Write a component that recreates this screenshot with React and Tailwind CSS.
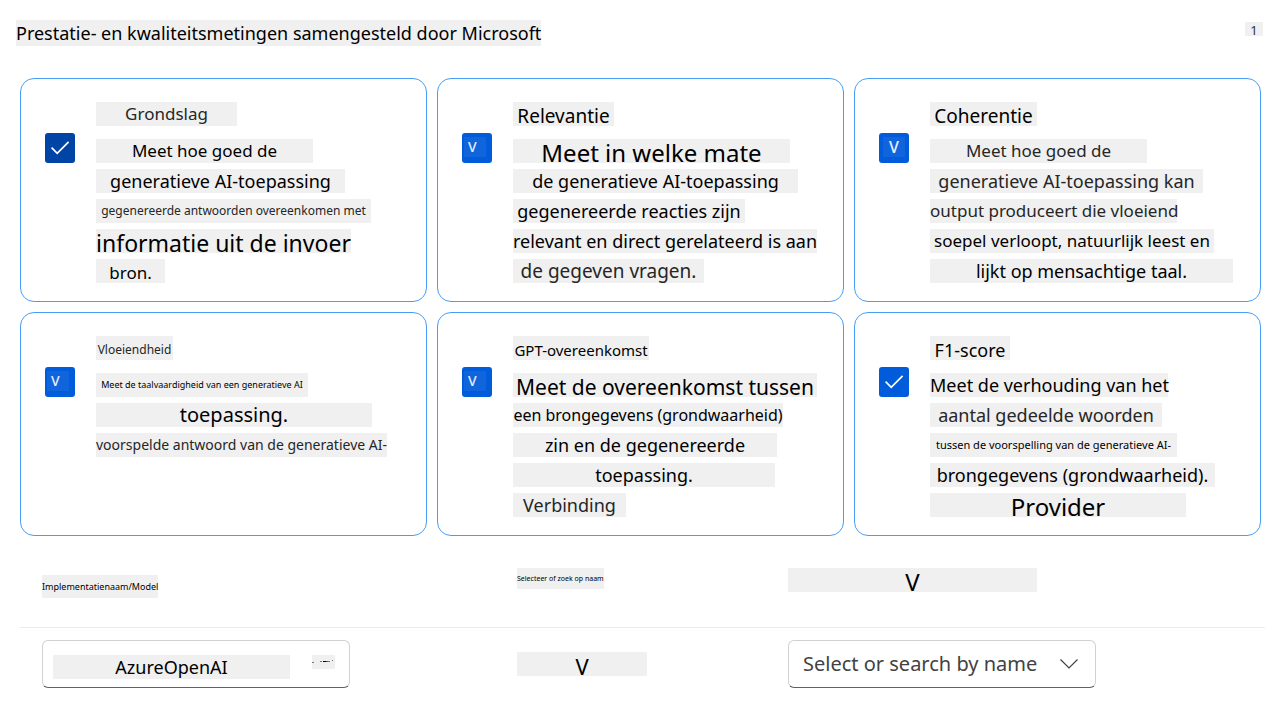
import React from 'react';

const DARK = 'text-black';
const SOFT = 'text-[#262626]';

const METRICS = [
  {
    id: 'grondslag',
    mark: 'check',
    box: 'bg-[#0044a6]',
    title: { text: 'Grondslag', style: 'w-[141px] text-[17px] leading-6', tone: SOFT },
    lines: [
      { text: 'Meet hoe goed de', style: 'w-[217px] text-[17px] leading-6', tone: DARK },
      { text: 'generatieve AI-toepassing', style: 'w-[249px] text-[18px] leading-6', tone: DARK },
      { text: 'gegenereerde antwoorden overeenkomen met', style: 'w-[275px] text-[12px] leading-6', tone: SOFT },
      { text: 'informatie uit de invoer', style: 'w-[255px] text-[23px] leading-7', tone: DARK },
      { text: 'bron.', style: 'w-[69px] text-[17px] leading-7', tone: DARK },
    ],
  },
  {
    id: 'relevantie',
    mark: 'v',
    box: 'bg-[#005cdb]',
    title: { text: 'Relevantie', style: 'w-[101px] text-[19px] leading-7', tone: DARK },
    lines: [
      { text: 'Meet in welke mate', style: 'w-[277px] text-[24px] leading-7', tone: DARK },
      { text: 'de generatieve AI-toepassing', style: 'w-[285px] text-[18px] leading-6', tone: DARK },
      { text: 'gegenereerde reacties zijn', style: 'w-[232px] text-[18px] leading-6', tone: DARK },
      { text: 'relevant en direct gerelateerd is aan', style: 'w-[304px] text-[18px] leading-6', tone: DARK },
      { text: 'de gegeven vragen.', style: 'w-[191px] text-[19px] leading-6', tone: SOFT },
    ],
  },
  {
    id: 'coherentie',
    mark: 'v-large',
    box: 'bg-[#005cdb]',
    title: { text: 'Coherentie', style: 'w-[107px] text-[19px] leading-7', tone: DARK },
    lines: [
      { text: 'Meet hoe goed de', style: 'w-[217px] text-[17px] leading-6', tone: SOFT },
      { text: 'generatieve AI-toepassing kan', style: 'w-[273px] text-[18px] leading-6', tone: SOFT },
      { text: 'output produceert die vloeiend', style: 'w-[247px] text-[17px] leading-6', tone: SOFT },
      { text: 'soepel verloopt, natuurlijk leest en', style: 'w-[284px] text-[17px] leading-6', tone: DARK },
      { text: 'lijkt op mensachtige taal.', style: 'w-[303px] text-[18px] leading-6', tone: DARK },
    ],
  },
  {
    id: 'vloeiendheid',
    mark: 'v',
    box: 'bg-[#005cdb]',
    title: { text: 'Vloeiendheid', style: 'w-[77px] text-[12px] leading-7', tone: SOFT },
    lines: [
      { text: 'Meet de taalvaardigheid van een generatieve AI', style: 'w-[212px] text-[9px] leading-6', tone: DARK },
      { text: 'toepassing.', style: 'w-[276px] text-[20px] leading-6', tone: DARK },
      { text: 'voorspelde antwoord van de generatieve AI-', style: 'w-[291px] text-[14px] leading-6', tone: SOFT },
    ],
  },
  {
    id: 'gpt-overeenkomst',
    mark: 'v',
    box: 'bg-[#005cdb]',
    title: { text: 'GPT-overeenkomst', style: 'w-[136px] text-[15px] leading-7', tone: DARK },
    lines: [
      { text: 'Meet de overeenkomst tussen', style: 'w-[304px] text-[21px] leading-7', tone: DARK },
      { text: 'een brongegevens (grondwaarheid)', style: 'w-[270px] text-[16px] leading-6', tone: DARK },
      { text: 'zin en de gegenereerde', style: 'w-[264px] text-[18px] leading-6', tone: DARK },
      { text: 'toepassing.', style: 'w-[262px] text-[18px] leading-6', tone: DARK },
      { text: 'Verbinding', style: 'w-[113px] text-[18px] leading-6', tone: SOFT },
    ],
  },
  {
    id: 'f1-score',
    mark: 'check',
    box: 'bg-[#005cdb]',
    title: { text: 'F1-score', style: 'w-[80px] text-[18px] leading-7', tone: DARK },
    lines: [
      { text: 'Meet de verhouding van het', style: 'w-[238px] text-[18px] leading-6', tone: DARK },
      { text: 'aantal gedeelde woorden', style: 'w-[232px] text-[18px] leading-6', tone: SOFT },
      { text: 'tussen de voorspelling van de generatieve AI-', style: 'w-[247px] text-[11px] leading-6', tone: DARK },
      { text: 'brongegevens (grondwaarheid).', style: 'w-[285px] text-[18px] leading-6', tone: DARK },
      { text: 'Provider', style: 'w-[256px] text-[24px] leading-7', tone: DARK },
    ],
  },
];

function Chip({ text, style, tone }) {
  return (
    <span className={`block h-6 bg-[#f0f0f0] text-center whitespace-nowrap ${style} ${tone}`}>{text}</span>
  );
}

function Mark({ kind }) {
  if (kind === 'check') {
    return (
      <svg
        viewBox="0 0 30 30"
        className="pointer-events-none absolute inset-0 hidden size-[30px] peer-checked:block"
        fill="none"
        stroke="#ffffff"
        strokeWidth="1.7"
        aria-hidden="true"
      >
        <path d="M6.6 14.7 L12.2 20.3 L23.6 8.8" />
      </svg>
    );
  }
  const size = kind === 'v-large' ? 'left-1 text-[16px] text-center' : 'left-0.5 pl-1 text-[14px] text-left';
  return (
    <span
      aria-hidden="true"
      className={`pointer-events-none absolute top-1 hidden h-5 w-[22px] bg-[#1065dd] leading-5 font-medium text-[#e6f0ff] peer-checked:block ${size}`}
    >
      V
    </span>
  );
}

function MetricCard({ metric }) {
  return (
    <article className="flex gap-[21px] rounded-[14px] border border-[#479ef5] bg-white pt-[23px] pr-3 pb-[18px] pl-6">
      <span className="relative mt-[31px] size-[30px] shrink-0">
        <input
          id={metric.id}
          type="checkbox"
          defaultChecked
          className={`peer block size-[30px] appearance-none rounded-[3px] ${metric.box}`}
        />
        <Mark kind={metric.mark} />
      </span>
      <div className="flex flex-col gap-[13px]">
        <label htmlFor={metric.id}>
          <Chip {...metric.title} />
        </label>
        <div className="flex flex-col gap-1.5">
          {metric.lines.map((line) => (
            <Chip key={line.text} {...line} />
          ))}
        </div>
      </div>
    </article>
  );
}

const FIELD = 'flex h-12 w-full max-w-[308px] rounded-[6px] border border-[#d1d1d1] border-b-[#616161] bg-white';
const COLUMNS = 'grid grid-cols-[475fr_271fr_477fr] pl-[22px]';

export default function App() {
  return (
    <div className="bg-white pb-5 font-['Noto_Sans',sans-serif] text-black">
      <header className="flex items-start justify-between pt-5 pr-[25px] pl-4">
        <h1 className="bg-[#f0f0f0] text-[18px] leading-[26px] font-normal">
          Prestatie- en kwaliteitsmetingen samengesteld door Microsoft
        </h1>
        <span className="mt-0.5 h-3.5 w-[18px] bg-[#f0f0f0] text-center text-[13px] leading-4 text-[#333333]">1</span>
      </header>

      <main className="pt-8 pr-[23px] pl-5">
        <section className="grid grid-cols-3 gap-2.5 pr-1">
          {METRICS.map((metric) => (
            <MetricCard key={metric.id} metric={metric} />
          ))}
        </section>

        <section>
          <div className={`${COLUMNS} items-start border-b border-[#ebebeb] pt-8 pb-[29px]`}>
            <label
              htmlFor="deployment"
              className="h-[23px] self-end justify-self-start bg-[#f0f0f0] text-[9px] leading-[23px]"
            >
              Implementatienaam/Model
            </label>
            <span className="h-[21px] justify-self-start bg-[#f0f0f0] text-[7px] leading-[21px]">
              Selecteer of zoek op naam
            </span>
            <label htmlFor="provider" className="mb-1.5 block h-6 w-[249px] bg-[#f0f0f0] text-center text-[24px] leading-7">
              V
            </label>
          </div>

          <div className={`${COLUMNS} items-center pt-3`}>
            <div className={`${FIELD} items-start gap-[22px] pt-3.5 pr-3.5 pl-2.5`}>
              <select
                id="deployment"
                defaultValue="azure"
                className="h-6 min-w-0 flex-1 appearance-none bg-[#f0f0f0] text-center text-[18px] leading-6 text-black"
              >
                <option value="azure">AzureOpenAI</option>
              </select>
              <svg viewBox="0 0 23 14" className="h-3.5 w-[23px] shrink-0 bg-[#f0f0f0]" aria-hidden="true">
                <path d="M0 7.500h2M8 6.500h2M16 6.500h2M20 5.500h1" stroke="#777777" strokeWidth="1" />
                <path d="M11 6.500h3" stroke="#000000" strokeWidth="1" />
                <path d="M14 6.500h2" stroke="#555555" strokeWidth="1" />
              </svg>
            </div>
            <span className="block h-6 w-[130px] bg-[#f0f0f0] text-center text-[22px] leading-7">V</span>
            <div className={`${FIELD} relative`}>
              <select
                id="provider"
                defaultValue=""
                className="h-full w-full appearance-none bg-transparent pr-12 pl-3.5 text-[20px] text-[#424242]"
              >
                <option value="">Select or search by name</option>
              </select>
              <svg
                viewBox="0 0 20 12"
                className="pointer-events-none absolute top-[17px] right-4 h-3 w-5"
                fill="none"
                stroke="#424242"
                strokeWidth="1.2"
                aria-hidden="true"
              >
                <path d="M1.500 1.500 L10 10 L18.500 1.500" />
              </svg>
            </div>
          </div>
        </section>
      </main>
    </div>
  );
}
